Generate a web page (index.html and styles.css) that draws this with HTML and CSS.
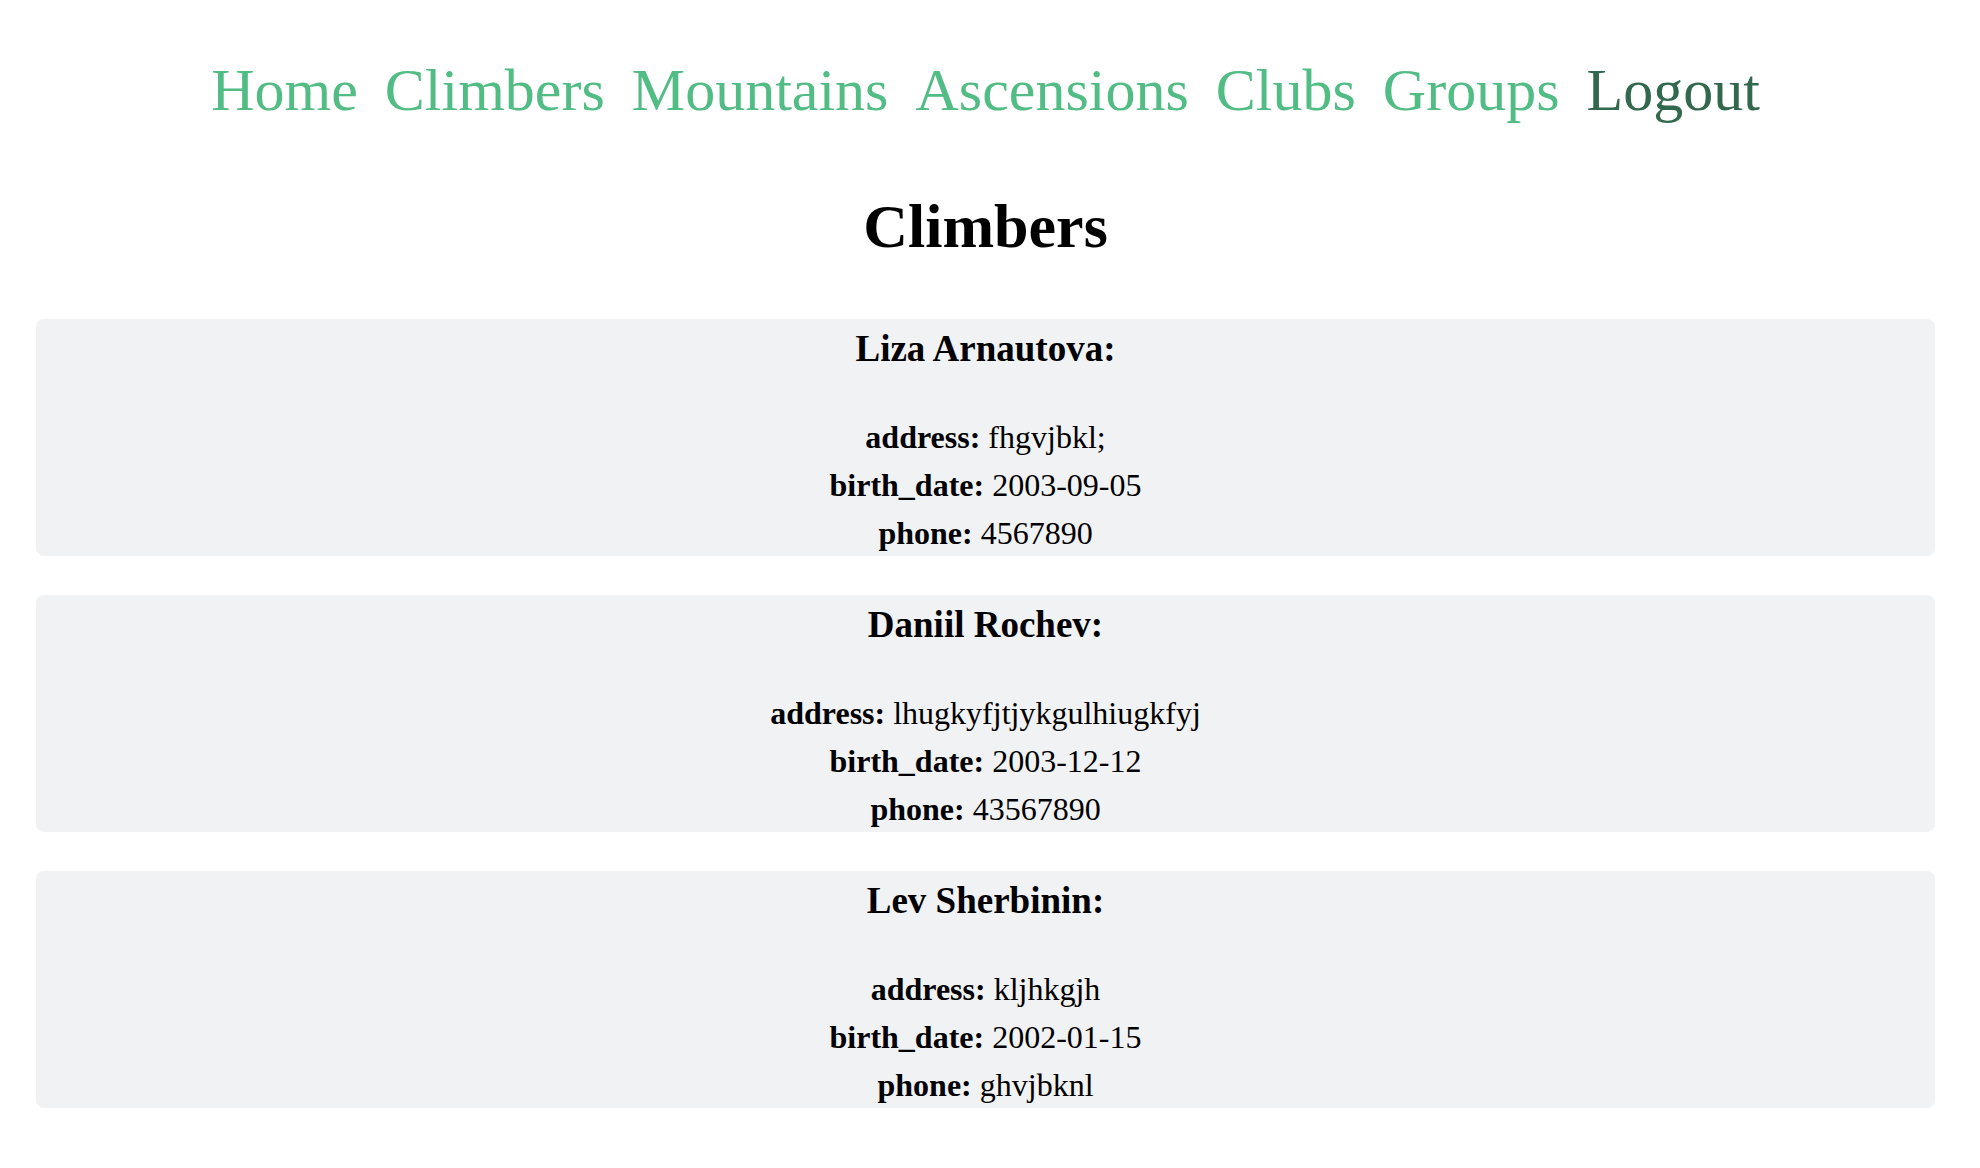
FILE: index.html
```html
<!DOCTYPE html>
<html lang="en">
<head>
<meta charset="utf-8">
<title>Climbers</title>
<link rel="stylesheet" href="styles.css">
</head>
<body>
<div class="page">
  <nav class="nav">
    <a class="nav-link" href="#">Home</a>
    <a class="nav-link" href="#">Climbers</a>
    <a class="nav-link" href="#">Mountains</a>
    <a class="nav-link" href="#">Ascensions</a>
    <a class="nav-link" href="#">Clubs</a>
    <a class="nav-link" href="#">Groups</a>
    <a class="nav-link nav-logout" href="#">Logout</a>
  </nav>
  <h1 class="title">Climbers</h1>
  <div class="list">
    <div class="card">
      <h3 class="card-name">Liza Arnautova:</h3>
      <p class="field"><b>address:</b> fhgvjbkl;</p>
      <p class="field"><b>birth_date:</b> 2003-09-05</p>
      <p class="field"><b>phone:</b> 4567890</p>
    </div>
    <div class="card">
      <h3 class="card-name">Daniil Rochev:</h3>
      <p class="field"><b>address:</b> lhugkyfjtjykgulhiugkfyj</p>
      <p class="field"><b>birth_date:</b> 2003-12-12</p>
      <p class="field"><b>phone:</b> 43567890</p>
    </div>
    <div class="card">
      <h3 class="card-name">Lev Sherbinin:</h3>
      <p class="field"><b>address:</b> kljhkgjh</p>
      <p class="field"><b>birth_date:</b> 2002-01-15</p>
      <p class="field"><b>phone:</b> ghvjbknl</p>
    </div>
  </div>
</div>
</body>
</html>
```
FILE: styles.css
```css
html, body {
  margin: 0;
  padding: 0;
  background: #ffffff;
}

body {
  font-family: "Liberation Serif", "Times New Roman", serif;
  color: #000000;
}

.page {
  margin: 0 45px 0 36px;
  padding-top: 56px;
  text-align: center;
}

.nav {
  font-size: 60px;
  line-height: 69px;
}

.nav-link {
  color: #52bc85;
  text-decoration: none;
  margin: 0 6px;
}

.nav-logout {
  color: #32684e;
}

.title {
  font-size: 62px;
  line-height: 69px;
  font-weight: bold;
  margin: 67px 0 0 0;
}

.list {
  margin-top: 58px;
  display: flex;
  flex-direction: column;
  gap: 39px;
}

.card {
  background: #f1f2f4;
  border-radius: 8px;
  padding-top: 8px;
  height: 237px;
  box-sizing: border-box;
}

.card-name {
  font-size: 37px;
  line-height: 43px;
  font-weight: bold;
  margin: 0 0 43px 0;
}

.field {
  font-size: 32px;
  line-height: 48px;
  margin: 0;
}
```
